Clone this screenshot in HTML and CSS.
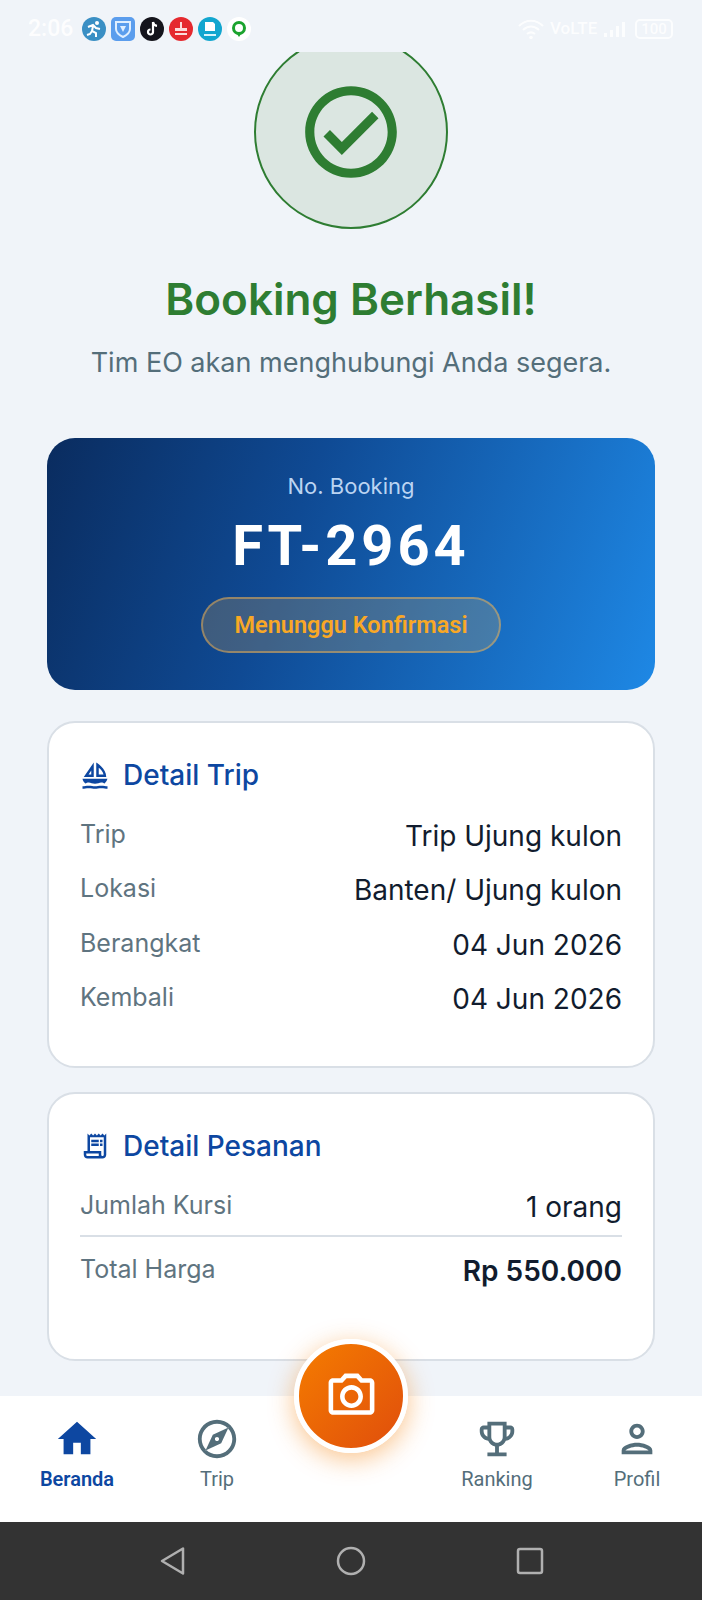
FILE: index.html
```html
<!DOCTYPE html>
<html lang="id">
<head>
<meta charset="utf-8">
<title>Booking Berhasil</title>
<link rel="stylesheet" href="styles.css">
</head>
<body>
<div class="screen">
  <header class="status">
    <span class="time">2:06</span>
    <div class="apps">
      <svg class="app" viewBox="0 0 24 24"><circle cx="12" cy="12" r="12" fill="#3a8fc4"/><circle cx="15" cy="6" r="2" fill="#fff"/><path d="M6 10l5-2 3 3 4 1M11 9l-1 5 4 2v4M10 14l-2 3-3 1" fill="none" stroke="#fff" stroke-width="2"/></svg>
      <svg class="app" viewBox="0 0 24 24"><rect width="24" height="24" rx="5" fill="#5b9ded"/><path d="M5 5h14v7c0 4-3 6-7 8-4-2-7-4-7-8z" fill="none" stroke="#dfeeff" stroke-width="2"/><path d="M9 9h6l-3 6z" fill="#dfeeff"/></svg>
      <svg class="app" viewBox="0 0 24 24"><circle cx="12" cy="12" r="12" fill="#14141c"/><path d="M13 5v10a2.5 2.5 0 1 1-2.5-2.5M13 5c.4 2.4 2 3.6 4 3.8" fill="none" stroke="#fff" stroke-width="2.2"/></svg>
      <svg class="app" viewBox="0 0 24 24"><circle cx="12" cy="12" r="12" fill="#e5292f"/><path d="M6 11h12v3H6zM6 16h12v2H6zM11 5h2v6h-2z" fill="#fbdcdc"/></svg>
      <svg class="app" viewBox="0 0 24 24"><circle cx="12" cy="12" r="12" fill="#12a6cf"/><path d="M7 5h8l2 2v7H7z" fill="#fff"/><path d="M6 17h12v2H6z" fill="#d6f3fb"/></svg>
      <svg class="app" viewBox="0 0 24 24"><circle cx="12" cy="12" r="12" fill="#fff"/><circle cx="12" cy="11" r="5.5" fill="none" stroke="#1ba32e" stroke-width="3"/><path d="M10 17h4l-2 3z" fill="#1ba32e"/></svg>
    </div>
    <div class="sys">
      <svg class="wifi" viewBox="0 0 26 22"><path d="M1 8c7-7 17-7 24 0M5 12c5-4.500 11-4.500 16 0M9 16c2.500-2 5.500-2 8 0" fill="none" stroke="#fff" stroke-width="2.200"/><circle cx="13" cy="19.500" r="1.800" fill="#fff"/></svg>
      <span class="volte">VoLTE</span>
      <div class="signal"><i class="b1"></i><i class="b2"></i><i class="b3"></i><i class="b4"></i></div>
      <span class="battery">100</span>
    </div>
  </header>

  <main class="content">
    <div class="hero">
      <svg class="hero-icon" viewBox="0 0 24 24"><path d="M12 2C6.48 2 2 6.48 2 12s4.48 10 10 10 10-4.48 10-10S17.52 2 12 2zm0 18c-4.41 0-8-3.59-8-8s3.59-8 8-8 8 3.59 8 8-3.59 8-8 8zm4.590-12.420L10 14.170l-2.590-2.580L6 13l4 4 8-8z"/></svg>
    </div>
    <h1 class="title">Booking Berhasil!</h1>
    <p class="subtitle">Tim EO akan menghubungi Anda segera.</p>

    <section class="ticket">
      <div class="ticket-label">No. Booking</div>
      <div class="ticket-code">FT-2964</div>
      <div class="pill">Menunggu Konfirmasi</div>
    </section>

    <section class="card card-trip">
      <h2 class="card-title">
        <svg class="card-icon" viewBox="0 0 24 24"><path d="M11 13.500V2L3 13.500h8zm-2-2H6.830L9 8.380v3.120zM21 13.500C21 6.500 13 2 13 2v11.500h8zm-6-2V6.200c1.700 1.300 3.400 3.200 3.800 5.300H15zM22 15H2c.310 1.530 1.160 2.840 2.330 3.730.650-.270 1.700-.730 2.670-.730 1.500 0 3 1 5 1s3.500-1 5-1c.970 0 2.020.460 2.670.730A6.970 6.970 0 0 0 22 15zM2 21v2c1.500 0 3-.500 5-.500s3.500.500 5 .500 3-.500 5-.500 3.500.500 5 .500v-2c-1.500 0-3-.500-5-.500s-3.500.500-5 .500-3-.500-5-.500-3.500.500-5 .500z"/></svg>
        Detail Trip
      </h2>
      <div class="row"><span class="label">Trip</span><span class="value">Trip Ujung kulon</span></div>
      <div class="row"><span class="label">Lokasi</span><span class="value">Banten/ Ujung kulon</span></div>
      <div class="row"><span class="label">Berangkat</span><span class="value">04 Jun 2026</span></div>
      <div class="row"><span class="label">Kembali</span><span class="value">04 Jun 2026</span></div>
    </section>

    <section class="card card-order">
      <h2 class="card-title">
        <svg class="card-icon" viewBox="0 0 24 24"><path d="M19.500 3.500 18 2l-1.500 1.500L15 2l-1.500 1.500L12 2l-1.500 1.500L9 2 7.500 3.500 6 2v14H3v3c0 1.660 1.340 3 3 3h12c1.660 0 3-1.340 3-3V2l-1.500 1.500zM15 20H6c-.550 0-1-.450-1-1v-1h10v2zm4-1c0 .550-.450 1-1 1s-1-.450-1-1v-3H8V5h11v14z"/><path d="M9 7h6v2H9zm7 0h2v2h-2zM9 10h6v2H9zm7 0h2v2h-2z"/></svg>
        Detail Pesanan
      </h2>
      <div class="row"><span class="label">Jumlah Kursi</span><span class="value">1 orang</span></div>
      <div class="divider"></div>
      <div class="row row-total"><span class="label">Total Harga</span><span class="value">Rp 550.000</span></div>
    </section>
  </main>

  <nav class="tabs">
    <a class="tab tab-active"><svg class="tab-icon" viewBox="0 0 24 24"><path d="M10 20v-6h4v6h5v-8h3L12 3 2 12h3v8z"/></svg><span>Beranda</span></a>
    <a class="tab"><svg class="tab-icon" viewBox="0 0 24 24"><path d="M12 10.900c-.610 0-1.100.490-1.100 1.100s.490 1.100 1.100 1.100c.610 0 1.100-.490 1.100-1.100s-.490-1.100-1.100-1.100zM12 2C6.480 2 2 6.480 2 12s4.480 10 10 10 10-4.480 10-10S17.520 2 12 2zm0 18c-4.410 0-8-3.590-8-8s3.590-8 8-8 8 3.590 8 8-3.590 8-8 8zm2.190-5.810L6 18l3.810-8.190L18 6l-3.810 8.190z"/></svg><span>Trip</span></a>
    <div class="tab-gap"></div>
    <a class="tab"><svg class="tab-icon" viewBox="0 0 24 24"><path d="M19 5h-2V3H7v2H5c-1.100 0-2 .900-2 2v1c0 2.550 1.920 4.630 4.390 4.940.630 1.500 1.980 2.630 3.610 2.960V19H7v2h10v-2h-4v-3.100c1.630-.330 2.980-1.460 3.610-2.960C19.080 12.630 21 10.550 21 8V7c0-1.100-.900-2-2-2zM5 8V7h2v3.820C5.840 10.400 5 9.300 5 8zm7 6c-1.650 0-3-1.350-3-3V5h6v6c0 1.650-1.350 3-3 3zm7-6c0 1.300-.840 2.400-2 2.820V7h2v1z"/></svg><span>Ranking</span></a>
    <a class="tab"><svg class="tab-icon" viewBox="0 0 24 24"><path d="M12 6c1.100 0 2 .900 2 2s-.900 2-2 2-2-.900-2-2 .900-2 2-2m0 10c2.700 0 5.800 1.290 6 2H6c.230-.720 3.310-2 6-2m0-12C9.790 4 8 5.790 8 8s1.790 4 4 4 4-1.790 4-4-1.790-4-4-4zm0 10c-2.670 0-8 1.340-8 4v2h16v-2c0-2.660-5.330-4-8-4z"/></svg><span>Profil</span></a>
    <button class="fab" aria-label="Kamera"><svg class="fab-icon" viewBox="0 0 24 24"><path d="M14.120 4l1.830 2H20v12H4V6h4.050l1.830-2h4.240M15 2H9L7.170 4H4c-1.100 0-2 .900-2 2v12c0 1.100.900 2 2 2h16c1.100 0 2-.900 2-2V6c0-1.100-.900-2-2-2h-3.170L15 2zm-3 7c1.650 0 3 1.350 3 3s-1.350 3-3 3-3-1.350-3-3 1.350-3 3-3m0-2c-2.760 0-5 2.240-5 5s2.240 5 5 5 5-2.240 5-5-2.240-5-5-5z"/></svg></button>
  </nav>

  <footer class="sysnav">
    <svg class="sys-icon" viewBox="0 0 32 32"><path d="M27 3.500v25L6 16z" fill="none" stroke="#b0b0b0" stroke-width="2.500" stroke-linejoin="round"/></svg>
    <svg class="sys-icon" viewBox="0 0 32 32"><circle cx="16" cy="16" r="13" fill="none" stroke="#b0b0b0" stroke-width="2.500"/></svg>
    <svg class="sys-icon" viewBox="0 0 32 32"><rect x="4" y="4" width="24" height="24" rx="2" fill="none" stroke="#b0b0b0" stroke-width="2.500"/></svg>
  </footer>
</div>
</body>
</html>
```
FILE: styles.css
```css
* { box-sizing: border-box; }
html, body { margin: 0; padding: 0; }
body { background: #f0f4f9; font-family: "Inter", "Liberation Sans", sans-serif; }
.screen { width: 702px; height: 1600px; display: flex; flex-direction: column; overflow: hidden; background: #f0f4f9; }

.status { height: 52px; flex: none; display: flex; align-items: center; padding: 5px 0 0 28px; color: #fff; position: relative; z-index: 1; background: #f0f4f9; }
.time { font: 500 23px/1 "Roboto", sans-serif; width: 50px; opacity: .9; }
.apps { display: flex; gap: 5px; margin-left: 4px; }
.app { width: 24px; height: 24px; display: block; }
.sys { margin-left: auto; display: flex; align-items: center; padding-right: 29px; opacity: .85; }
.wifi { width: 26px; height: 22px; }
.volte { font: 500 17px/1 "Roboto", sans-serif; margin-left: 6px; width: 46px; }
.signal { display: flex; align-items: flex-end; gap: 3px; height: 16px; margin: 0 10px 0 8px; }
.signal i { width: 3px; background: #fff; display: block; }
.b1 { height: 4px; } .b2 { height: 7px; } .b3 { height: 11px; } .b4 { height: 15px; }
.battery { width: 38px; height: 20px; border: 2px solid #fff; border-radius: 5px; font: 500 15px/16px "Roboto", sans-serif; text-align: center; }

.content { flex: 1; min-height: 0; overflow: hidden; padding: 0 47px; display: flex; flex-direction: column; }
.hero { width: 194px; height: 194px; flex: none; border-radius: 50%; margin: -17px auto 0; background: #dbe6e1; border: 2.500px solid #2e7d32; display: flex; align-items: center; justify-content: center; }
.hero-icon { width: 110px; height: 110px; fill: #2e7d32; }
.title { margin: 39px 0 0; text-align: center; font-size: 44px; line-height: 62px; font-weight: 600; color: #2e7d32; white-space: nowrap; }
.subtitle { margin: 14px 0 0; text-align: center; font-size: 27px; line-height: 38px; color: #546e7a; white-space: nowrap; }

.ticket { height: 252px; flex: none; margin-top: 56px; border-radius: 28px; background: linear-gradient(110deg, #0a2c5f 0%, #0f4a94 40%, #1e88e5 100%); display: flex; flex-direction: column; align-items: center; }
.ticket-label { margin-top: 33px; font-size: 22px; line-height: 30px; color: #bbd4f2; }
.ticket-code { margin-top: 14px; font: 700 56px/62px "Roboto", sans-serif; letter-spacing: 4px; color: #fff; }
.pill { margin-top: 20px; width: 300px; height: 56px; border-radius: 28px; border: 2px solid rgba(255,183,77,.45); background: rgba(255,183,77,.2); color: #f9a825; font: 600 23.500px/52px "Roboto", sans-serif; text-align: center; }

.card { flex: none; background: #fff; border: 2px solid #d9dfe6; border-radius: 28px; padding: 0 31px; margin-top: 31px; }
.card-trip { height: 347px; }
.card-order { height: 269px; margin-top: 24px; }
.card-title { margin: 33px 0 22px; display: flex; align-items: center; gap: 13px; font-size: 28px; line-height: 38px; font-weight: 500; color: #0d47a1; }
.card-icon { width: 30px; height: 30px; fill: #0d47a1; flex: none; }
.row { display: flex; justify-content: space-between; align-items: flex-start; height: 54.400px; }
.label { font-size: 25px; line-height: 36px; color: #5f7480; }
.value { font-size: 28px; line-height: 40px; color: #111c2e; }
.divider { height: 2px; background: #d9dfe6; margin-top: -6px; margin-bottom: 14px; }
.row-total .value { font-weight: 600; }

.tabs { height: 126px; flex: none; background: #fff; position: relative; display: grid; grid-template-columns: repeat(5, 140px); padding-left: 7px; }
.tab { display: flex; flex-direction: column; align-items: center; padding-top: 20px; color: #546e7a; font: 400 20px/26px "Roboto", sans-serif; }
.tab-active { color: #0d47a1; font-weight: 600; }
.tab-icon { width: 46px; height: 46px; fill: #546e7a; margin-bottom: 4px; }
.tab-active .tab-icon { fill: #0d47a1; }
.fab { position: absolute; left: 294px; top: -57px; width: 114px; height: 114px; border-radius: 50%; border: 5px solid #fff; padding: 0; background: linear-gradient(135deg, #f57c00, #e04e0c); box-shadow: 0 6px 26px rgba(245,124,0,.45); display: flex; align-items: center; justify-content: center; }
.fab-icon { width: 55px; height: 55px; fill: #fff; }

.sysnav { height: 78px; flex: none; background: #333; display: flex; justify-content: space-between; align-items: center; padding: 0 156px; }
.sys-icon { width: 32px; height: 32px; }
```
